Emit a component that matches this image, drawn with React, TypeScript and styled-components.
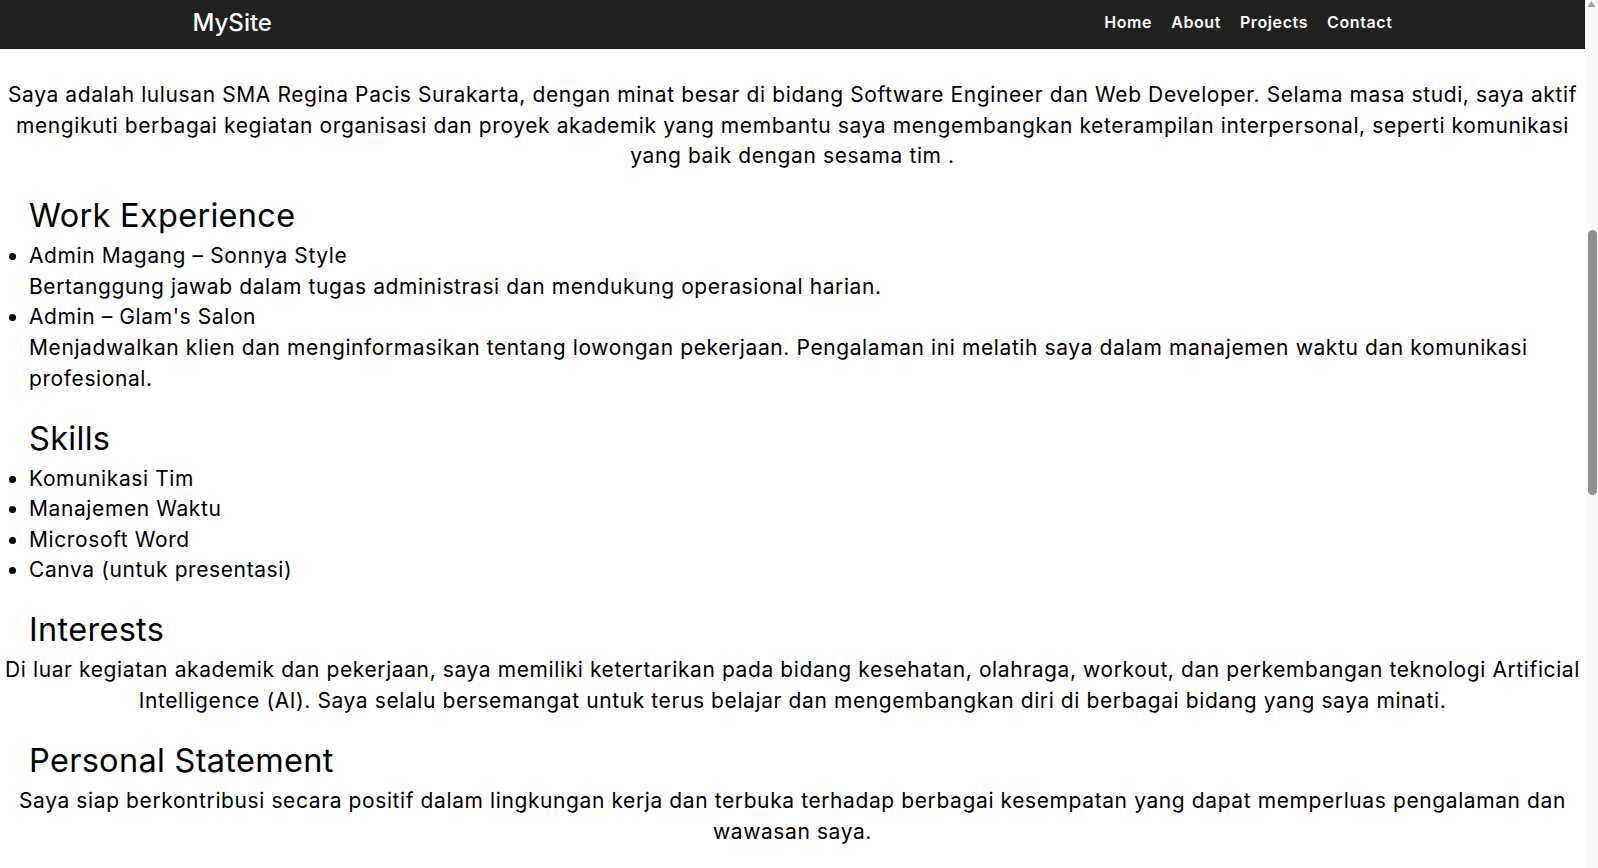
import React, { useCallback, useLayoutEffect, useRef, useState } from "react";
import styled, { createGlobalStyle } from "styled-components";

const GlobalStyle = createGlobalStyle`
  html, body { margin: 0; padding: 0; height: 100%; overflow: hidden; }
  body {
    background: #ffffff;
    color: #000000;
    font-family: "Inter", "Noto Sans", sans-serif;
  }
  * { box-sizing: border-box; }
`;

const Frame = styled.div`
  display: flex;
  height: 100vh;
`;

const Page = styled.div`
  flex: 1;
  min-width: 0;
  overflow-y: auto;
  overflow-x: hidden;
  scrollbar-width: none;
  &::-webkit-scrollbar { display: none; }
`;

const ScrollTrack = styled.div`
  width: 13px;
  flex-shrink: 0;
  background: #fafafa;
  display: flex;
  flex-direction: column;
  align-items: stretch;
`;

const ScrollArrow = styled.svg`
  display: block;
  width: 13px;
  height: 14px;
  flex-shrink: 0;
`;

const ScrollThumb = styled.div`
  margin: 0 1px 0 3px;
  border-radius: 5px;
  background: #8f8f8f;
`;

const NavBar = styled.header`
  position: sticky;
  top: 0;
  height: 49px;
  padding-bottom: 5px;
  background: #202020;
  display: flex;
  align-items: center;
  z-index: 10;
`;

const NavInner = styled.div`
  width: 100%;
  max-width: 1200px;
  margin: 0 auto;
  display: flex;
  align-items: center;
  justify-content: space-between;
`;

const Brand = styled.a`
  color: #ffffff;
  font-family: "Inter", sans-serif;
  font-size: 24px;
  font-weight: 500;
  text-decoration: none;
`;

const NavLinks = styled.nav`
  display: flex;
  align-items: center;
  gap: 19px;
`;

const NavLink = styled.a`
  color: #ffffff;
  font-family: "Inter", sans-serif;
  font-size: 16px;
  font-weight: 600;
  letter-spacing: 0.6px;
  text-decoration: none;
`;

const Hero = styled.section`
  height: 691px;
  display: flex;
  flex-direction: column;
  align-items: center;
  justify-content: center;
  gap: 12px;
  background: #f4f4f4;
`;

const HeroTitle = styled.h1`
  margin: 0;
  font-size: 48px;
  font-weight: 600;
`;

const HeroText = styled.p`
  margin: 0;
  font-size: 21px;
  letter-spacing: 0.6px;
`;

const About = styled.section`
  padding-top: 50px;
`;

const Paragraph = styled.p`
  margin: 0;
  padding: 0;
  text-align: center;
  font-size: 21px;
  line-height: 30.6px;
  letter-spacing: 0.6px;
`;

const SectionTitle = styled.h2`
  margin: 25.5px 0 5.5px;
  padding-left: 29px;
  font-size: 32.5px;
  font-weight: 400;
  line-height: 38.4px;
  letter-spacing: 0.3px;
`;

const List = styled.ul`
  margin: 0;
  padding-left: 29px;
`;

const Item = styled.li`
  font-size: 21px;
  line-height: 30.6px;
  letter-spacing: 0.6px;
`;

const ItemTitle = styled.span`
  display: block;
`;

const Projects = styled.section`
  padding: 80px 40px;
  min-height: 640px;
  display: flex;
  flex-direction: column;
  align-items: center;
  gap: 24px;
`;

const Contact = styled.section`
  padding: 80px 40px;
  min-height: 558px;
  display: flex;
  flex-direction: column;
  align-items: center;
  gap: 16px;
  background: #f4f4f4;
`;

const ARROW = 14;

export default function App() {
  const pageRef = useRef<HTMLDivElement>(null);
  const introRef = useRef<HTMLParagraphElement>(null);
  const [thumb, setThumb] = useState({ top: 0, height: 0, track: 0 });

  const measure = useCallback(() => {
    const page = pageRef.current;
    if (!page) return;
    const track = page.clientHeight - ARROW * 2;
    const height = Math.max(20, (track * page.clientHeight) / page.scrollHeight);
    const range = page.scrollHeight - page.clientHeight;
    const top = range > 0 ? ((track - height) * page.scrollTop) / range : 0;
    setThumb({ top, height, track });
  }, []);

  useLayoutEffect(() => {
    const page = pageRef.current;
    const el = introRef.current;
    if (!page || !el) return;
    const top = el.getBoundingClientRect().top - page.getBoundingClientRect().top + page.scrollTop;
    page.scrollTop = top - 80;
    measure();
  }, [measure]);

  return (
    <>
      <GlobalStyle />
      <Frame>
        <Page ref={pageRef} onScroll={measure}>
          <NavBar>
            <NavInner>
              <Brand href="#home">MySite</Brand>
              <NavLinks>
                <NavLink href="#home">Home</NavLink>
                <NavLink href="#about">About</NavLink>
                <NavLink href="#projects">Projects</NavLink>
                <NavLink href="#contact">Contact</NavLink>
              </NavLinks>
            </NavInner>
          </NavBar>

          <Hero id="home">
            <HeroTitle>MySite</HeroTitle>
            <HeroText>Software Engineer &amp; Web Developer</HeroText>
          </Hero>

          <About id="about">
            <Paragraph ref={introRef}>
              Saya adalah lulusan SMA Regina Pacis Surakarta, dengan minat besar di bidang Software Engineer dan Web
              Developer. Selama masa studi, saya aktif mengikuti berbagai kegiatan organisasi dan proyek akademik yang
              membantu saya mengembangkan keterampilan interpersonal, seperti komunikasi yang baik dengan sesama tim .
            </Paragraph>

            <SectionTitle>Work Experience</SectionTitle>
            <List>
              <Item>
                <ItemTitle>Admin Magang – Sonnya Style</ItemTitle>
                Bertanggung jawab dalam tugas administrasi dan mendukung operasional harian.
              </Item>
              <Item>
                <ItemTitle>Admin – Glam's Salon</ItemTitle>
                Menjadwalkan klien dan menginformasikan tentang lowongan pekerjaan. Pengalaman ini melatih saya dalam
                manajemen waktu dan komunikasi profesional.
              </Item>
            </List>

            <SectionTitle>Skills</SectionTitle>
            <List>
              <Item>Komunikasi Tim</Item>
              <Item>Manajemen Waktu</Item>
              <Item>Microsoft Word</Item>
              <Item>Canva (untuk presentasi)</Item>
            </List>

            <SectionTitle>Interests</SectionTitle>
            <Paragraph>
              Di luar kegiatan akademik dan pekerjaan, saya memiliki ketertarikan pada bidang kesehatan, olahraga,
              workout, dan perkembangan teknologi Artificial Intelligence (AI). Saya selalu bersemangat untuk terus
              belajar dan mengembangkan diri di berbagai bidang yang saya minati.
            </Paragraph>

            <SectionTitle>Personal Statement</SectionTitle>
            <Paragraph>
              Saya siap berkontribusi secara positif dalam lingkungan kerja dan terbuka terhadap berbagai kesempatan
              yang dapat memperluas pengalaman dan wawasan saya.
            </Paragraph>
          </About>

          <Projects id="projects">
            <SectionTitle>Projects</SectionTitle>
          </Projects>

          <Contact id="contact">
            <SectionTitle>Contact</SectionTitle>
          </Contact>
        </Page>

        <ScrollTrack aria-hidden="true">
          <ScrollArrow viewBox="0 0 13 14">
            <path d="M2.5 7 L6.5 1 L10.5 7 Z" fill="#a3a3a3" />
          </ScrollArrow>
          <ScrollThumb style={{ marginTop: thumb.top, height: thumb.height }} />
        </ScrollTrack>
      </Frame>
    </>
  );
}
